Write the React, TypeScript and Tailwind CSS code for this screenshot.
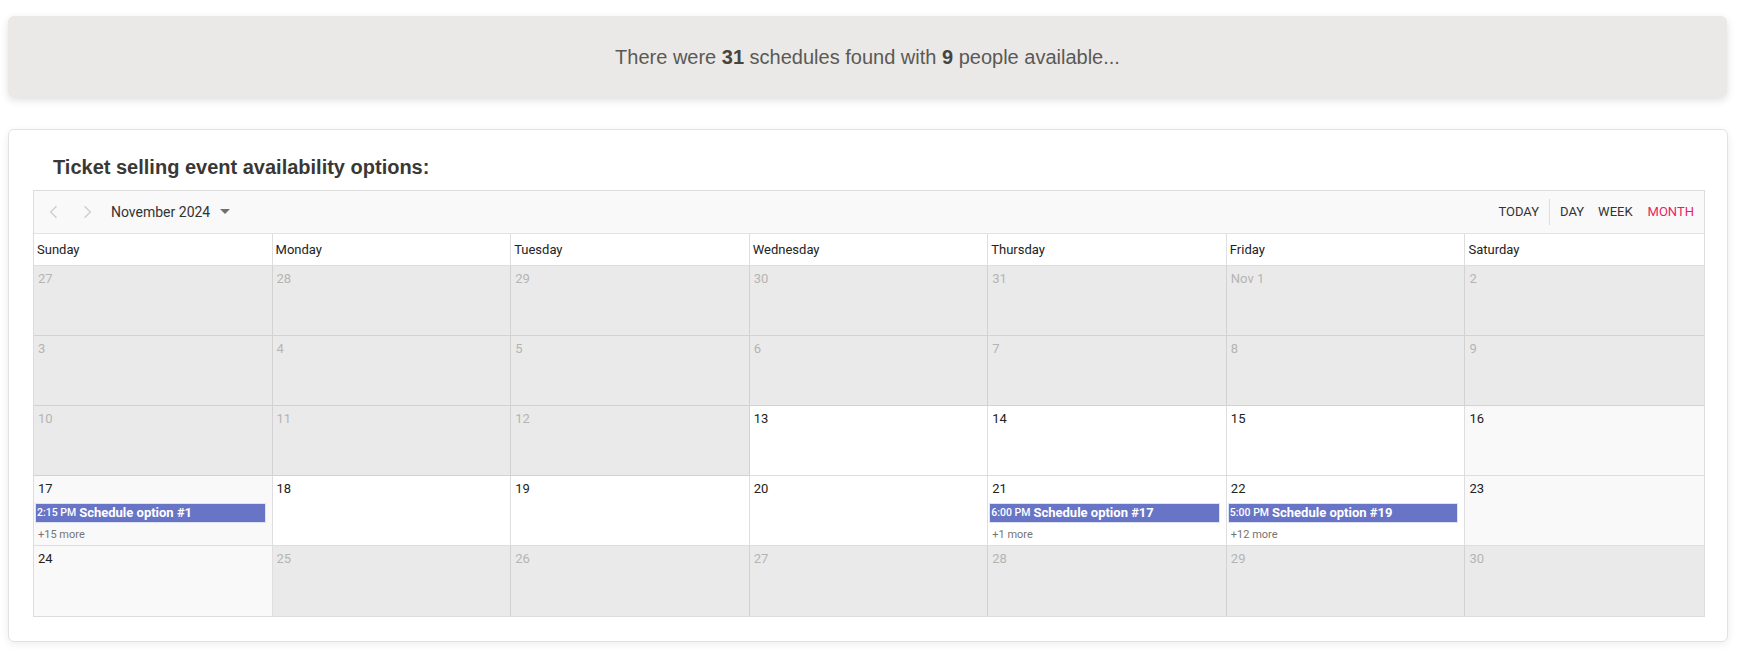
import React from "react";

type Ev = { time: string; title: string; more: number };

const weeks: number[][] = [
    [27, 28, 29, 30, 31, 1, 2],
    [3, 4, 5, 6, 7, 8, 9],
    [10, 11, 12, 13, 14, 15, 16],
    [17, 18, 19, 20, 21, 22, 23],
    [24, 25, 26, 27, 28, 29, 30],
];

const days = ["Sunday", "Monday", "Tuesday", "Wednesday", "Thursday", "Friday", "Saturday"];

const events: Record<number, Ev> = {
    17: { time: "2:15 PM", title: "Schedule option #1", more: 15 },
    21: { time: "6:00 PM", title: "Schedule option #17", more: 1 },
    22: { time: "5:00 PM", title: "Schedule option #19", more: 12 },
};

function Chevron({ left }: { left?: boolean }) {
    return (
        <svg width="20" height="20" viewBox="0 0 24 24" fill="none" stroke="#cdcdcd" strokeWidth="1.6">
            {left ? <path d="M15 5 L8 12 L15 19" /> : <path d="M9 5 L16 12 L9 19" />}
        </svg>
    );
}

function DayCell({ day, w, col }: { day: number; w: number; col: number }) {
    const otherMonth = (w === 0 && day > 20);
    const disabled = otherMonth || (w < 2) || (w === 2 && col < 3) || (w === 4 && col > 0);
    const weekend = col === 0 || col === 6;
    const ev = !otherMonth ? events[day] : undefined;
    let label = String(day);
    if (w === 0 && day === 1) label = "Nov 1";

    let bg = "bg-white";
    if (disabled) bg = "bg-[#eaeaea]";
    else if (weekend) bg = "bg-[#f9f9f9]";

    return (
        <div className={`${bg} h-[70px] border-b border-r ${disabled ? "border-[#d2d2d2]" : "border-[#dedede]"} ${col === 6 ? "border-r-0" : ""} ${w === 4 ? "border-b-0" : ""}`}>
            <div className={`pl-1 pt-[4px] text-[13px] leading-[18px] ${disabled ? "text-[#b4b4b4]" : "text-[#222]"}`}>{label}</div>
            {ev && (
                <div>
                    <div className="mt-[5px] ml-[1px] mr-[6px] h-[20px] flex items-center gap-[3px] bg-[#6874c6] border border-[#dfe2f3] px-[1px] text-white whitespace-nowrap overflow-hidden">
                        <span className="text-[10.5px] font-medium">{ev.time}</span>
                        <span className="text-[13px] font-bold">{ev.title}</span>
                    </div>
                    <div className="pl-1 mt-[5px] text-[11px] leading-[14px] text-[#757575]">+{ev.more} more</div>
                </div>
            )}
        </div>
    );
}

export default function App() {
    return (
        <div className="min-h-screen bg-white pt-4 pl-2 pr-[21px] font-['Roboto',sans-serif]">
            <div className="h-[81px] rounded-md bg-[#eae9e7] shadow-[0_3px_8px_rgba(0,0,0,0.13)] flex items-center justify-center">
                <p className="font-['Liberation_Sans',Arial,sans-serif] text-[20px] text-[#5b5955]">
                    There were <b className="text-[#46443f]">31</b> schedules found with <b className="text-[#46443f]">9</b> people available...
                </p>
            </div>

            <div className="mt-8 -mr-px rounded-md border border-[#e2e2e2] bg-white shadow-[0_2px_8px_rgba(0,0,0,0.08)] pl-6 pr-[22px] pt-[23px] pb-6">
                <h2 className="pl-5 mb-[9px] font-['Liberation_Sans',Arial,sans-serif] text-[20px] leading-[28px] font-bold text-[#3a3835]">
                    Ticket selling event availability options:
                </h2>

                <div className="border border-[#dcdcdc]">
                    <div className="h-[43px] bg-[#f9f9f9] border-b border-[#e3e3e3] flex items-center justify-between">
                        <div className="flex items-center pl-[10px]">
                            <Chevron left />
                            <span className="w-[13px]" />
                            <Chevron />
                            <span className="ml-[14px] text-[14px] text-[#333]">November 2024</span>
                            <svg className="ml-[10px]" width="10" height="6" viewBox="0 0 10 6">
                                <path d="M0 0 L10 0 L5 5 Z" fill="#707070" />
                            </svg>
                        </div>
                        <div className="flex items-center pr-[10px] text-[13px] uppercase text-[#333]">
                            <span>Today</span>
                            <span className="mx-[10px] w-px h-[26px] bg-[#dedede]" />
                            <span>Day</span>
                            <span className="ml-[14px]">Week</span>
                            <span className="ml-[15px] text-[#e91e63]">Month</span>
                        </div>
                    </div>

                    <div className="grid grid-cols-7 h-[32px] border-b border-[#dedede]">
                        {days.map((d, i) => (
                            <div key={d} className={`pl-[3px] pt-[1px] flex items-center text-[13px] text-[#222] ${i < 6 ? "border-r border-[#dedede]" : ""}`}>{d}</div>
                        ))}
                    </div>

                    {weeks.map((wk, w) => (
                        <div key={w} className="grid grid-cols-7">
                            {wk.map((d, c) => (
                                <DayCell key={c} day={d} w={w} col={c} />
                            ))}
                        </div>
                    ))}
                </div>
            </div>
        </div>
    );
}
